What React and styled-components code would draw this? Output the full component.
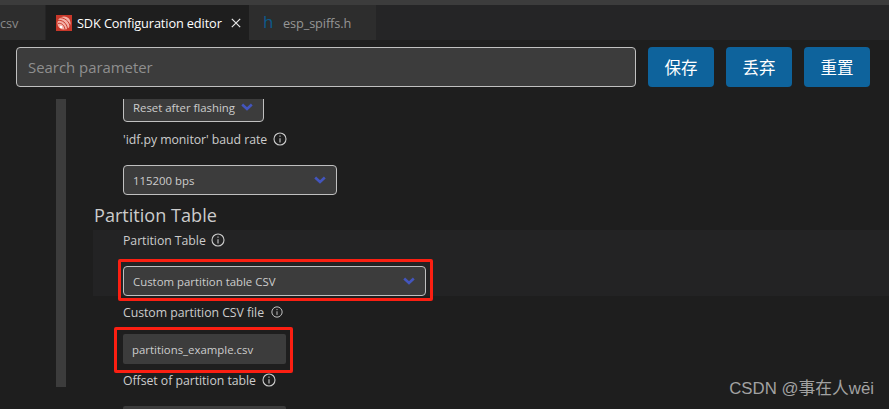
import React from "react";
import styled, { createGlobalStyle } from "styled-components";

const Global = createGlobalStyle`
  html, body { margin: 0; padding: 0; background: #1e1e1e; }
  body { font-family: "Open Sans", "Noto Sans CJK SC", sans-serif; overflow: hidden; }
`;

const Page = styled.div`
  width: 889px; height: 409px; display: flex; flex-direction: column;
  background: #1e1e1e; overflow: hidden; position: relative;
`;
const TitleStrip = styled.div`height: 5px; background: #3c3c3c; flex: none;`;
const TabBar = styled.div`height: 35px; background: #252526; display: flex; flex: none;`;
const Tab = styled.div`
  width: ${p => p.$w}px; margin-right: ${p => p.$gap || 0}px; height: 35px; box-sizing: border-box; display: flex; align-items: center;
  background: ${p => (p.$active ? "#1e1e1e" : "#2d2d2d")};
  color: ${p => (p.$active ? "#ffffff" : "#969696")};
  font-size: 12.75px; white-space: nowrap; overflow: hidden; padding-left: ${p => p.$pad}px;
`;
const TabLabel = styled.span`margin-left: ${p => p.$ml || 0}px; letter-spacing: -0.12px;`;
const HGlyph = styled.span`color: #0c5a8c; font-size: 17px; width: 20px; margin-top: -2px;`;
const CloseIcon = styled.svg`width: 10px; height: 10px; margin-left: 9px; flex: none;`;

const SearchRow = styled.div`
  display: flex; gap: 12px; padding: 7px 19px 0 16px; height: 40px; flex: none;
`;
const SearchBox = styled.div`
  flex: 1; box-sizing: border-box; border: 1px solid #c0c0c0; border-radius: 4px; background: #3c3c3c;
  color: #8f8f8f; font-size: 14.9px; display: flex; align-items: center; padding-left: 11px;
`;
const ActionButton = styled.button`
  width: 66px; border: 0; border-radius: 4px; background: #0e639c; color: #fff; padding: 0;
  font-family: "Noto Sans CJK SC", sans-serif; font-size: 16.5px;
`;

const Body = styled.div`
  flex: 1; min-height: 0; display: flex; margin: 12px 0 0 56px; overflow: hidden;
`;
const Rail = styled.div`width: 10px; height: 288px; background: #3c3c3c; flex: none;`;
const Content = styled.div`flex: 1; min-width: 0; padding-left: 27px; display: flex; flex-direction: column; align-items: flex-start;`;

const Field = styled.div`padding-left: 30px; display: flex; flex-direction: column; align-items: flex-start;`;
const Label = styled.div`
  display: flex; align-items: center; gap: ${p => p.$gap ?? 6}px; height: 20px; color: #cccccc; font-size: 12.3px; letter-spacing: -0.05px;
`;
const Select = styled.div`
  position: relative; box-sizing: border-box; width: ${p => p.$w}px; height: ${p => p.$h || 30}px;
  margin: ${p => p.$m || "0"};
  border: 1px solid #c0c0c0; border-radius: 4px; background: #3c3c3c; color: #cccccc; font-size: 11.4px;
  display: flex; align-items: center; justify-content: space-between; padding: 0 10px 0 9px;
`;
const TextInput = styled.div`
  position: relative; box-sizing: border-box; width: 163px; height: 30px; border-radius: 2px; background: #3c3c3c; color: #cccccc;
  font-size: 11.4px; display: flex; align-items: center; padding-left: 9px; margin: ${p => p.$m || "0"};
`;
const Chevron = styled.svg`width: 12px; height: 8px; flex: none; margin-top: -1px;`;
const Heading = styled.div`color: #cccccc; font-size: 18.1px; height: 25px; line-height: 25px; margin-top: 8px; margin-left: 1px;`;
const SectionRow = styled.div`background: #232324; width: 796px; height: 66px; margin-top: 2px;`;
const Highlight = styled.div`
  position: absolute; top: ${p => p.$t}px; left: ${p => p.$l}px; right: ${p => p.$r}px; bottom: ${p => p.$b}px;
  border: 3px solid #fb1f12; border-radius: 2px; pointer-events: none;
`;
const Watermark = styled.div`
  position: absolute; right: 15px; bottom: 10px; color: #a2a2a2; font-family: "Liberation Sans", "Noto Sans CJK SC", sans-serif; font-size: 16.8px;
`;

const EspLogo = () => (
  <svg width="16" height="16" viewBox="0 0 16 16" style={{ flex: "none", marginRight: 5 }}>
    <rect width="16" height="16" fill="#c8382a" />
    <circle cx="8" cy="8" r="6.6" fill="#f3b0a6" />
    <g fill="none" stroke="#c8382a" strokeWidth="1">
      <path d="M1.5 5.5 C6 4.5 11 8 11.5 14" />
      <path d="M2 8.5 C5 7.5 8.5 10 9 14.5" />
      <path d="M3 2.8 C8 2 14 6.5 14 12" />
    </g>
    <circle cx="5" cy="12" r="1.3" fill="#fff" />
  </svg>
);
const Info = ({ size = 14 }) => (
  <svg width={size} height={size} viewBox="0 0 14 14" fill="none" stroke="#cccccc" strokeWidth="1.1">
    <circle cx="7" cy="7" r="6" />
    <path d="M7 6.2V10.4" />
    <path d="M7 3.6V4.8" />
  </svg>
);
const Down = () => (
  <Chevron viewBox="0 0 12 8" fill="none" stroke="#4355bd" strokeWidth="2.6">
    <path d="M1.2 1.5L6 6L10.8 1.5" />
  </Chevron>
);

export default function App() {
  return (
    <Page>
      <Global />
      <TitleStrip />
      <TabBar>
        <Tab $w={45} $gap={1} $pad={0}><TabLabel style={{ color: "#8a8a8a" }}>csv</TabLabel></Tab>
        <Tab $w={203} $active $pad={10}>
          <EspLogo />
          <TabLabel>SDK Configuration editor</TabLabel>
          <CloseIcon viewBox="0 0 10 10" stroke="#e8e8e8" strokeWidth="1.2"><path d="M.8.8L9.2 9.2M9.2.8L.8 9.2" /></CloseIcon>
        </Tab>
        <Tab $w={127} $pad={14}>
          <HGlyph>h</HGlyph>
          <TabLabel $ml={0}>esp_spiffs.h</TabLabel>
        </Tab>
      </TabBar>
      <SearchRow>
        <SearchBox>Search parameter</SearchBox>
        <ActionButton>保存</ActionButton>
        <ActionButton>丢弃</ActionButton>
        <ActionButton>重置</ActionButton>
      </SearchRow>
      <Body>
        <Rail />
        <Content>
          <Field>
            <Select $w={141} $m="-7px 0 7px 0">Reset after flashing<Down /></Select>
            <Label>'idf.py monitor' baud rate <Info /></Label>
            <Select $w={214} $m="16px 0 0 0">115200 bps<Down /></Select>
          </Field>
          <Heading>Partition Table</Heading>
          <SectionRow>
            <Field>
              <Label $gap={5}>Partition Table <Info /></Label>
              <Select $w={303} $m="16px 0 0 0">
                Custom partition table CSV<Down />
                <Highlight $t={-8} $l={-6} $r={-8} $b={-6} />
              </Select>
            </Field>
          </SectionRow>
          <Field>
            <Label $gap={7} style={{ marginTop: 6 }}>Custom partition CSV file <Info size={12} /></Label>
            <TextInput $m="12px 0 6px 0">
              partitions_example.csv
              <Highlight $t={-7} $l={-9} $r={-7} $b={-9} />
            </TextInput>
            <Label>Offset of partition table <Info /></Label>
            <TextInput $m="16px 0 0 0" />
          </Field>
        </Content>
      </Body>
      <Watermark>CSDN @事在人wēi</Watermark>
    </Page>
  );
}
